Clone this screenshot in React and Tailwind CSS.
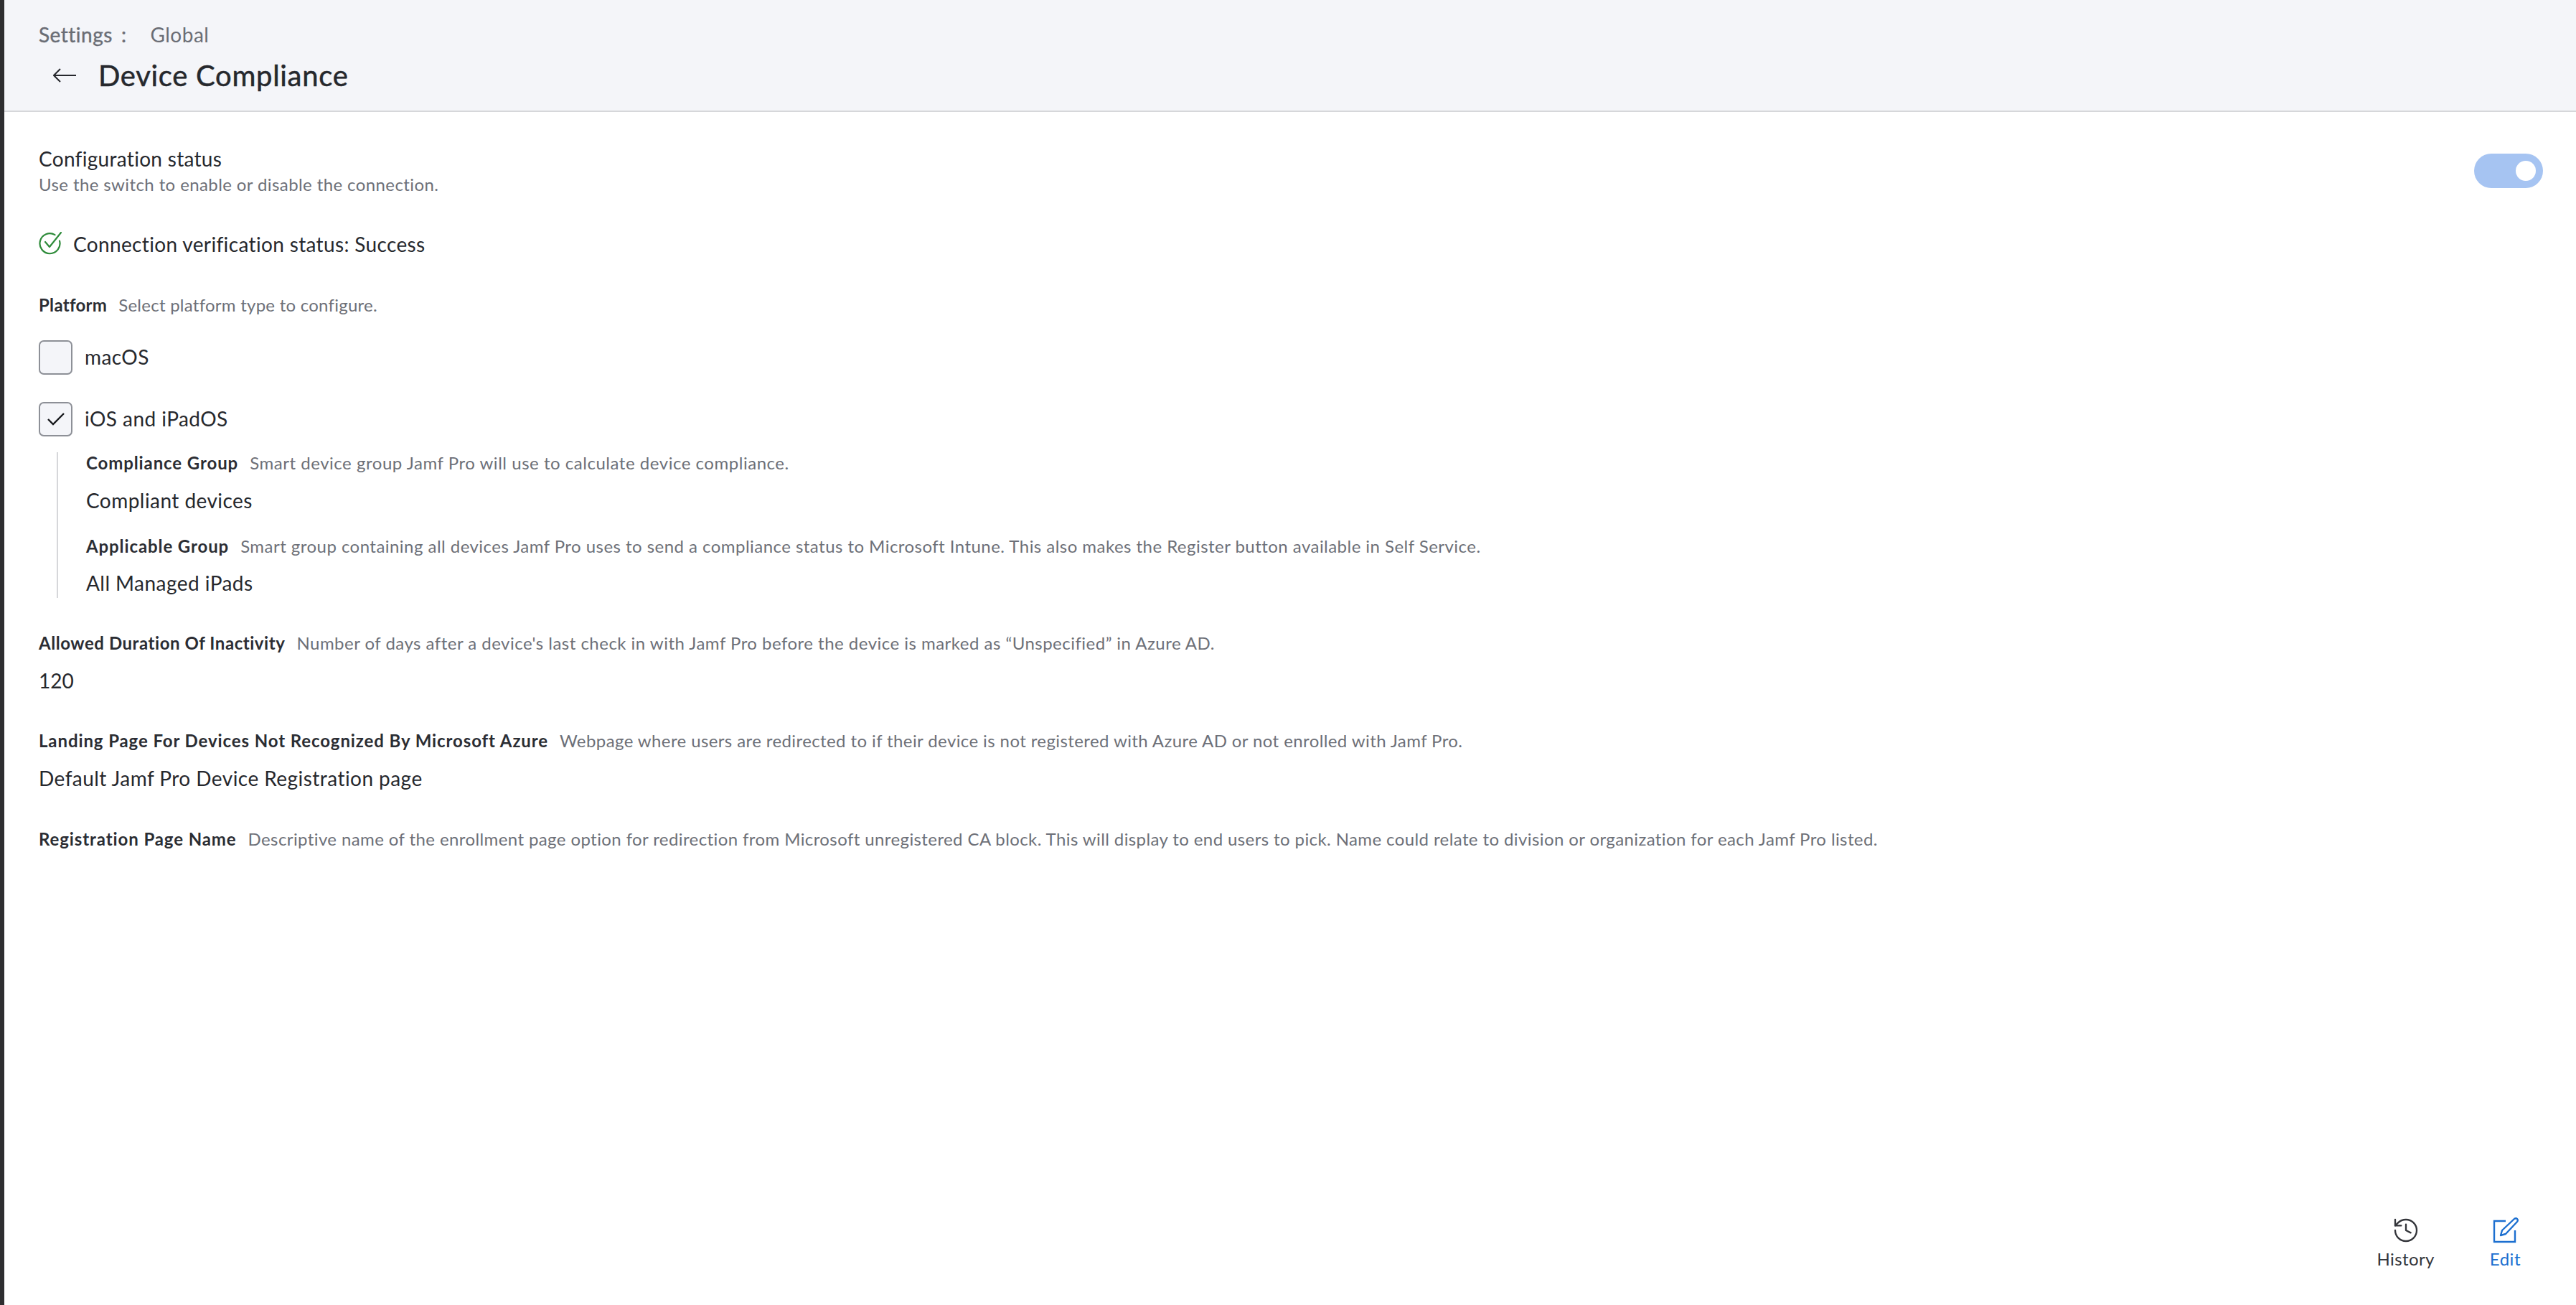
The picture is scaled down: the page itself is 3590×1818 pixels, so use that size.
import React from "react";
import { History } from "lucide-react";

const font = { fontFamily: '"Lato", "Open Sans", sans-serif' };

const Field = ({ label, hint, className = "", labelClass = "tracking-[0.9px]", hintClass = "tracking-[0.4px]" }) => (
  <div className={`flex items-baseline gap-4 h-[30px] leading-[30px] ${className}`}>
    <span className={`text-[24px] font-bold text-[#2b2d33] ${labelClass}`}>{label}</span>
    <span className={`text-[24px] text-[#6d7078] ${hintClass}`}>{hint}</span>
  </div>
);

const Value = ({ children, className = "" }) => (
  <div className={`text-[28px] leading-[36px] text-[#26282d] tracking-[0.45px] ${className}`}>{children}</div>
);

const Platform = ({ label, checked, className = "" }) => (
  <div className={`flex items-center gap-[17px] h-[48px] ${className}`}>
    <div className="w-[47px] h-[48px] rounded-[7px] border-2 border-[#8d9097] bg-[#f4f5f9] flex items-center justify-center">
      {checked && (
        <svg width="24" height="18" viewBox="0 0 24 18" fill="none" stroke="#15171b" strokeWidth="2.4">
          <path d="M1 9l7 7L23 1" />
        </svg>
      )}
    </div>
    <span className="text-[28px] text-[#26282d] tracking-[0.45px] pb-[2px]">{label}</span>
  </div>
);

export default function App() {
  return (
    <div style={font} className="h-screen flex bg-white overflow-hidden">
      <div className="w-[6px] bg-[#2e2e30] shrink-0" />
      <div className="flex-1 flex flex-col min-w-0">
        <header className="h-[156px] bg-[#f4f5f9] border-b-2 border-[#d6d7da] pl-12 pt-[29px] shrink-0">
          <div className="flex items-center h-[38px] text-[28px] text-[#6a6d75] tracking-[0.5px]">
            <span className="[-webkit-text-stroke:0.4px]">Settings</span>
            <span className="ml-3 [-webkit-text-stroke:0.4px]">:</span>
            <span className="ml-[33px]">Global</span>
          </div>
          <div className="flex items-center h-[50px] mt-[13px]">
            <svg width="32" height="20" viewBox="0 0 32 20" fill="none" stroke="#26282d" strokeWidth="2" className="ml-5">
              <path d="M32 10H2M10 1l-9 9 9 9" />
            </svg>
            <h1 className="ml-[31px] text-[40px] text-[#26282d] tracking-[0.7px] [-webkit-text-stroke:0.5px]">Device Compliance</h1>
          </div>
        </header>

        <main className="flex-1 pl-12 pr-[46px] pt-[46px] min-h-0">
          <div className="flex items-start justify-between">
            <div>
              <div className="text-[28px] leading-[38px] text-[#26282d] tracking-[0.3px]">Configuration status</div>
              <div className="text-[24px] leading-[32px] mt-[1px] text-[#6d7078] tracking-[0.4px]">Use the switch to enable or disable the connection.</div>
            </div>
            <div className="w-[96px] h-[48px] rounded-full bg-[#a6c4f2] flex items-center justify-end pr-[10px] mt-[12px]">
              <div className="w-[28px] h-[28px] rounded-full bg-white" />
            </div>
          </div>

          <div className="flex items-center mt-[47px] h-[40px]">
            <svg width="34" height="34" viewBox="0 0 34 34" fill="none" stroke="#2e8b3a" strokeWidth="2.2" strokeLinecap="round" strokeLinejoin="round">
              <path d="M29 12.500a14 14 0 1 1-6.500-8.400" />
              <path d="M9 14l6 7L31 1" />
            </svg>
            <span className="ml-[14px] text-[28px] text-[#26282d] tracking-[0.35px]">Connection verification status: Success</span>
          </div>

          <Field label="Platform" hint="Select platform type to configure." className="mt-[50px]" labelClass="tracking-[0.3px]" hintClass="tracking-[0.25px]" />
          <Platform label="macOS" className="mt-[34px]" />
          <Platform label="iOS and iPadOS" checked className="mt-[38px]" />

          <div className="mt-[22px] ml-[25px] border-l-2 border-[#d6d7da] pl-[39px] h-[203px]">
            <Field label="Compliance Group" hint="Smart device group Jamf Pro will use to calculate device compliance." hintClass="tracking-[0.53px]" />
            <Value className="mt-[19px]">Compliant devices</Value>
            <Field label="Applicable Group" hint="Smart group containing all devices Jamf Pro uses to send a compliance status to Microsoft Intune. This also makes the Register button available in Self Service." className="mt-[31px]" hintClass="tracking-[0.46px]" />
            <Value className="mt-[18px]">All Managed iPads</Value>
          </div>

          <Field label="Allowed Duration Of Inactivity" hint="Number of days after a device's last check in with Jamf Pro before the device is marked as “Unspecified” in Azure AD." className="mt-[48px]" labelClass="tracking-[0.55px]" hintClass="tracking-[0.48px]" />
          <Value className="mt-[19px] tracking-normal">120</Value>
          <Field label="Landing Page For Devices Not Recognized By Microsoft Azure" hint="Webpage where users are redirected to if their device is not registered with Azure AD or not enrolled with Jamf Pro." className="mt-[51px]" />
          <Value className="mt-[19px]">Default Jamf Pro Device Registration page</Value>
          <Field label="Registration Page Name" hint="Descriptive name of the enrollment page option for redirection from Microsoft unregistered CA block. This will display to end users to pick. Name could relate to division or organization for each Jamf Pro listed." className="mt-[52px]" />
        </main>

        <footer className="flex justify-end items-start h-[128px] pr-[77px] pt-1 shrink-0">
          <div className="flex flex-col items-center text-[#33353a]">
            <History size={40} strokeWidth={1.4} />
            <span className="text-[24px] leading-[32px] mt-1 tracking-[0.4px]">History</span>
          </div>
          <div className="flex flex-col items-center text-[#1c6fd0] ml-[77px]">
            <svg width="40" height="40" viewBox="0 0 40 40" fill="none" stroke="currentColor" strokeWidth="2.4">
              <path d="M21 7H5v29h29V20" />
              <path d="M14 27l2-7L33 4c1.500-1 3-1 4 0s1 2.500 0 4L21 25z" strokeLinejoin="round" />
            </svg>
            <span className="text-[24px] leading-[32px] mt-1 tracking-[0.5px]">Edit</span>
          </div>
        </footer>
      </div>
    </div>
  );
}
